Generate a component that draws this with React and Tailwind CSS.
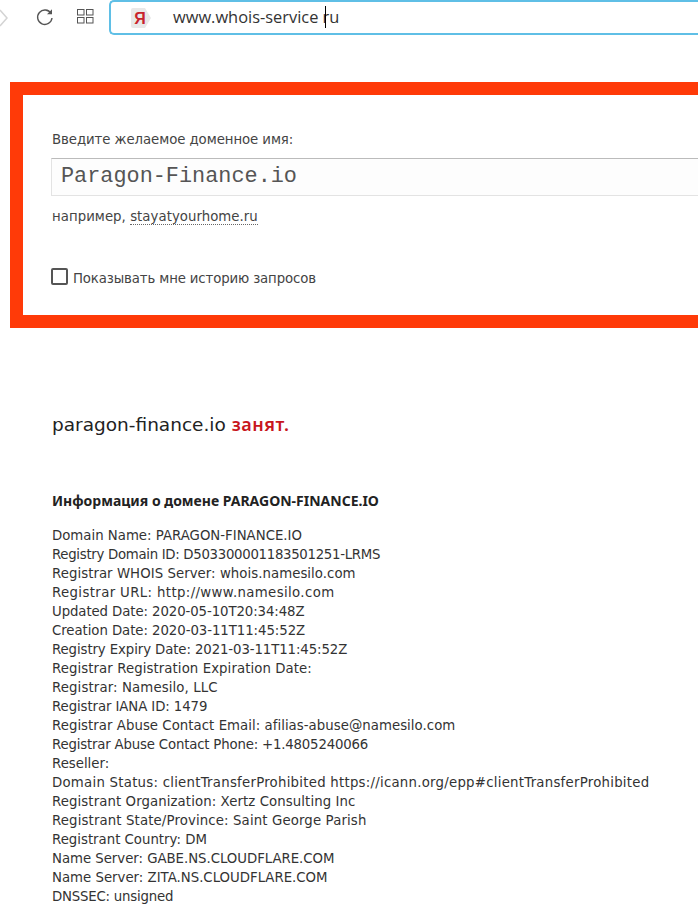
import React from 'react';

const whois = [
  ['Domain Name: PARAGON-FINANCE.IO', 'tracking-normal'],
  ['Registry Domain ID: D503300001183501251-LRMS', 'tracking-[-0.3px]'],
  ['Registrar WHOIS Server: whois.namesilo.com', 'tracking-[0.05px]'],
  ['Registrar URL: http://www.namesilo.com', 'tracking-[0.37px]'],
  ['Updated Date: 2020-05-10T20:34:48Z', 'tracking-[-0.09px]'],
  ['Creation Date: 2020-03-11T11:45:52Z', 'tracking-[-0.06px]'],
  ['Registry Expiry Date: 2021-03-11T11:45:52Z', 'tracking-[-0.1px]'],
  ['Registrar Registration Expiration Date:', 'tracking-[0.08px]'],
  ['Registrar: Namesilo, LLC', 'tracking-[0.12px]'],
  ['Registrar IANA ID: 1479', 'tracking-[-0.09px]'],
  ['Registrar Abuse Contact Email: afilias-abuse@namesilo.com', 'tracking-[0.04px]'],
  ['Registrar Abuse Contact Phone: +1.4805240066', 'tracking-[-0.18px]'],
  ['Reseller:', 'tracking-normal'],
  ['Domain Status: clientTransferProhibited https://icann.org/epp#clientTransferProhibited', 'tracking-[0.25px]'],
  ['Registrant Organization: Xertz Consulting Inc', 'tracking-[0.09px]'],
  ['Registrant State/Province: Saint George Parish', 'tracking-[0.13px]'],
  ['Registrant Country: DM', 'tracking-normal'],
  ['Name Server: GABE.NS.CLOUDFLARE.COM', 'tracking-[-0.03px]'],
  ['Name Server: ZITA.NS.CLOUDFLARE.COM', 'tracking-normal'],
  ['DNSSEC: unsigned', 'tracking-[-0.2px]'],
];

const BrowserBar = () => (
  <div className="flex items-start h-[36px] relative">
    <svg width="10" height="20" viewBox="0 0 10 20" className="mt-[8px] shrink-0" fill="none" stroke="#d4d4d4" strokeWidth="1.5">
      <path d="M0 2l7 8-7 8" />
    </svg>
    <svg width="20" height="20" viewBox="0 0 20 20" className="ml-[25px] mt-[7px] shrink-0" fill="none" stroke="#555" strokeWidth="1.4">
      <path d="M16 6.5A7.2 7.2 0 1 0 17 11" />
      <path d="M17 2.2v5h-5z" fill="#555" stroke="none" />
    </svg>
    <svg width="17" height="15" viewBox="0 0 17 15" className="ml-[22px] mt-[9px] shrink-0" fill="none" stroke="#555" strokeWidth="1">
      <rect x="0.5" y="0.5" width="6.5" height="5.5" />
      <rect x="9.5" y="0.5" width="6.5" height="5.5" />
      <rect x="0.5" y="8.5" width="6.5" height="5.5" />
      <rect x="9.5" y="8.5" width="6.5" height="5.5" />
    </svg>
    <div className="ml-[15px] flex-1 h-[35px] border-2 border-r-0 border-[#5fbfe6] rounded-l-[5px] flex items-center">
      <svg width="22" height="24" viewBox="0 0 22 24" className="ml-[19px] shrink-0">
        <path d="M3 2h12l6 10-6 10H3a2 2 0 0 1-2-2V4a2 2 0 0 1 2-2z" fill="#e8e8e8" />
        <text x="10" y="18" textAnchor="middle" fontFamily="Liberation Sans, sans-serif" fontWeight="700" fontSize="16" fill="#c8232c">Я</text>
      </svg>
      <span className="ml-[21px] font-['Open_Sans',sans-serif] text-[16.4px] text-[#333] relative">
        www.whois-service ru
        <span className="absolute left-[152px] top-[1px] w-px h-[22px] bg-black" />
      </span>
    </div>
  </div>
);

const SearchBox = () => (
  <div className="ml-[10px] mt-[46px] border-[13px] border-r-0 border-[#ff3a08] h-[246px] pl-[29px] pt-[35px] font-['DejaVu_Sans',sans-serif] text-[13.3px] text-[#444]">
    <div className="leading-[19px] tracking-[-0.07px]">Введите желаемое доменное имя:</div>
    <div className="mt-[9px] -ml-[1px] h-[38px] border border-r-0 border-[#e3e3e3] border-t-[#bbb] bg-[#fdfdfd] pl-[9px] flex items-center font-['Liberation_Mono',monospace] text-[21.85px] text-[#555]">
      Paragon-Finance.io
    </div>
    <div className="mt-[11px] leading-[19px] tracking-[0.04px]">
      например, <span className="border-b border-dotted border-[#666]">stayatyourhome.ru</span>
    </div>
    <div className="mt-[42px] flex items-start">
      <span className="-ml-[1px] w-[17px] h-[17px] border-2 border-[#555] rounded-[2px] shrink-0" />
      <span className="ml-[5px] mt-[1px] leading-[19px] tracking-[-0.13px]">Показывать мне историю запросов</span>
    </div>
  </div>
);

const App = () => (
  <div className="w-[698px] h-[910px] overflow-hidden bg-white font-['DejaVu_Sans',sans-serif] text-[#333]">
    <BrowserBar />
    <SearchBox />
    <div className="pl-[52px] pt-[83px]">
      <div className="text-[18.5px] leading-[27px] text-[#222]">
        paragon-finance.io <span className="font-['Noto_Sans',sans-serif] font-semibold text-[18px] tracking-[0.5px] text-[#c8161d]">занят.</span>
      </div>
      <div className="mt-[53px] text-[14px] leading-[19px] font-['Noto_Sans',sans-serif] font-bold text-[#222]">Информация о домене PARAGON-FINANCE.IO</div>
      <div className="mt-[16px] text-[13.3px] leading-[19px]">
        {whois.map(([line, spacing]) => (
          <div key={line} className={`whitespace-nowrap ${spacing}`}>{line}</div>
        ))}
      </div>
    </div>
  </div>
);

export default App;
